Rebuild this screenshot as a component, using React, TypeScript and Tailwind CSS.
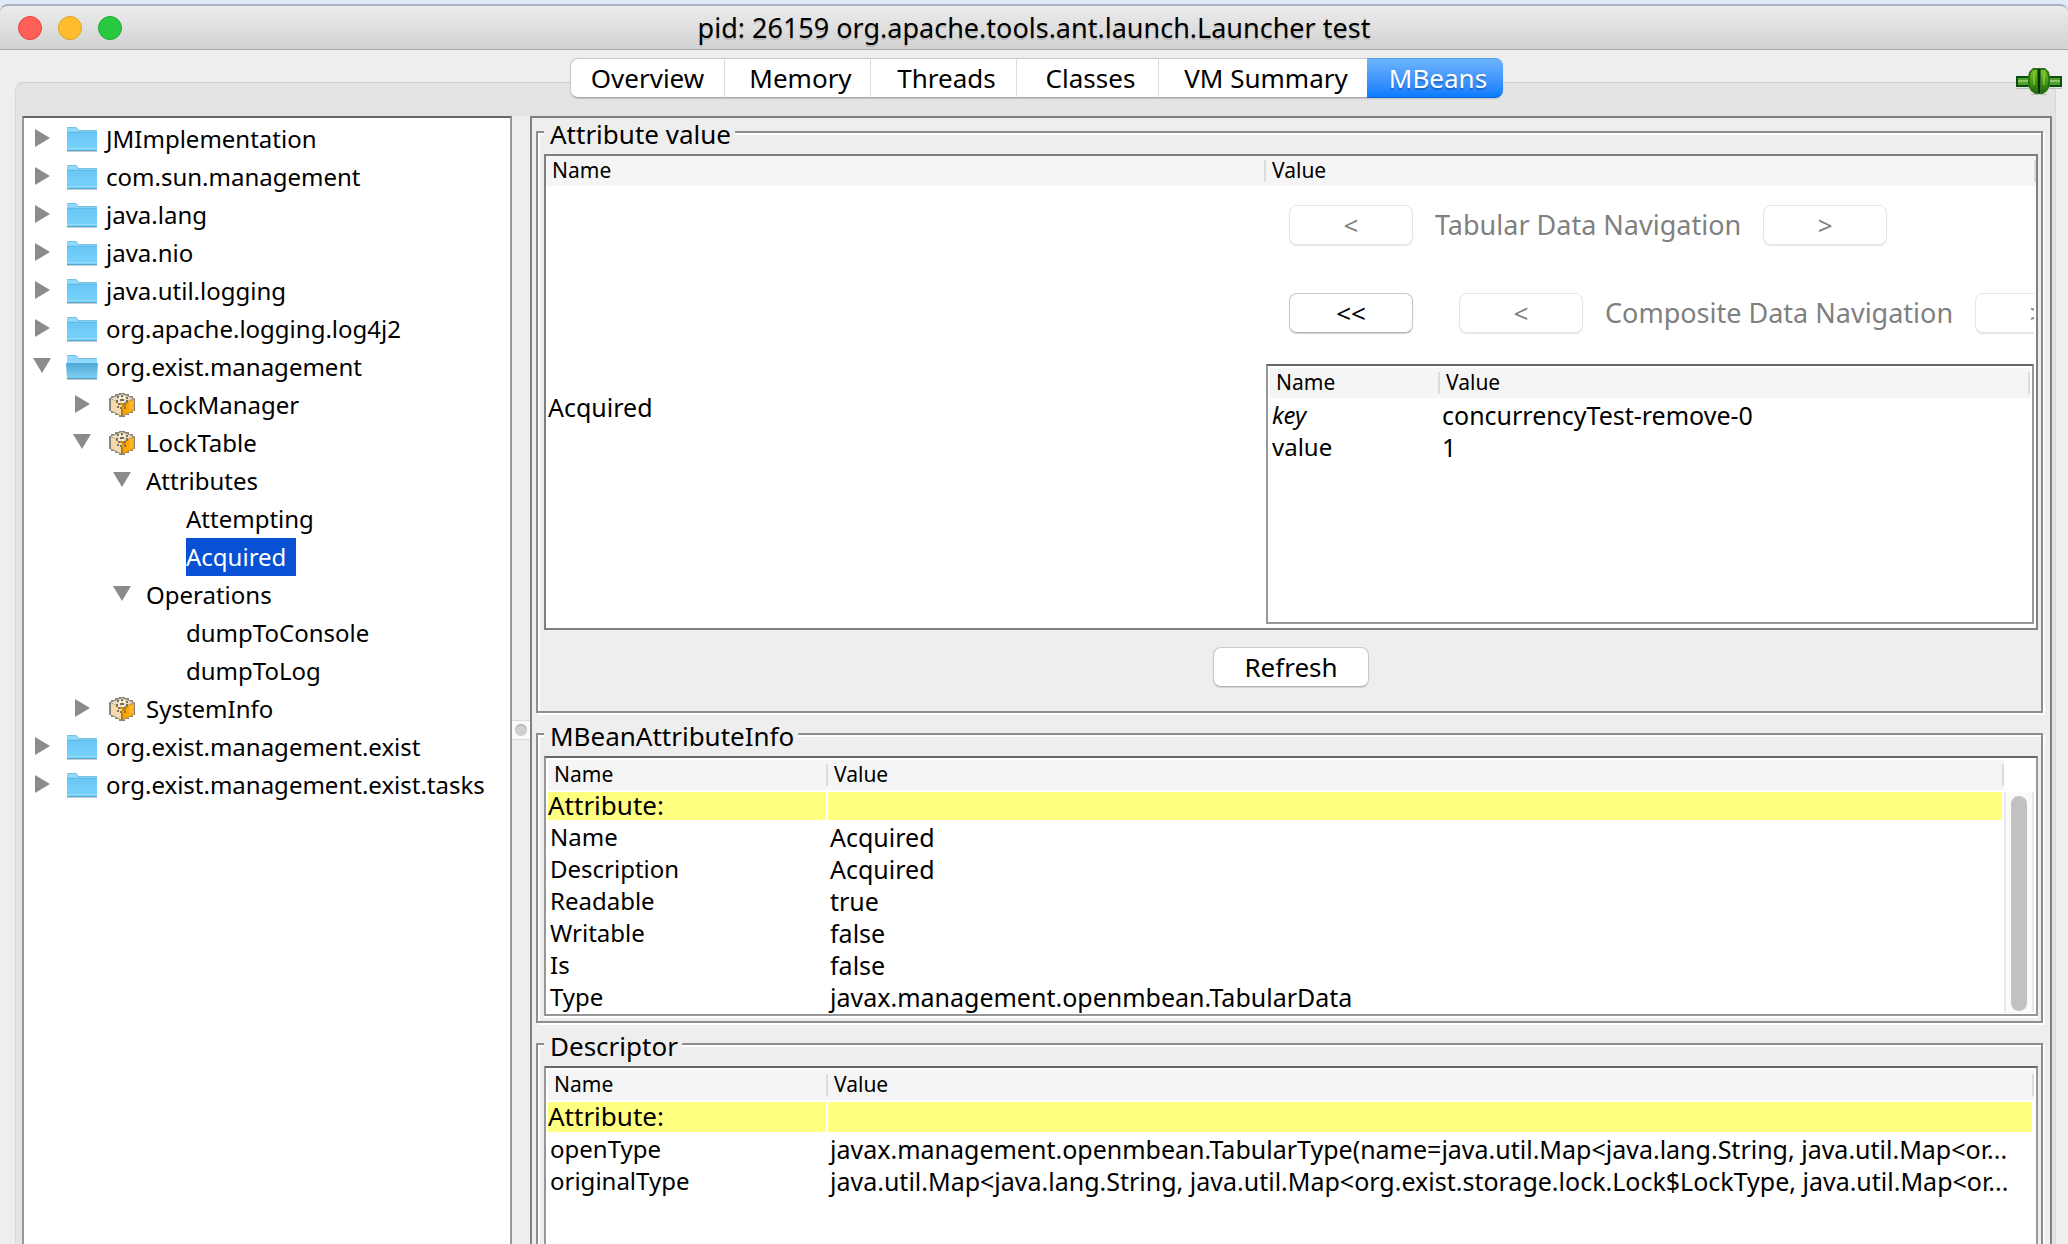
import React from "react";

type Twisty = "closed" | "open" | "none";
type NodeIcon = "folder" | "folder-open" | "bean" | "none";

interface TreeNode {
  label: string;
  level: 0 | 1 | 2 | 3;
  twisty: Twisty;
  icon: NodeIcon;
  selected?: boolean;
}

const TREE: TreeNode[] = [
  { label: "JMImplementation", level: 0, twisty: "closed", icon: "folder" },
  { label: "com.sun.management", level: 0, twisty: "closed", icon: "folder" },
  { label: "java.lang", level: 0, twisty: "closed", icon: "folder" },
  { label: "java.nio", level: 0, twisty: "closed", icon: "folder" },
  { label: "java.util.logging", level: 0, twisty: "closed", icon: "folder" },
  { label: "org.apache.logging.log4j2", level: 0, twisty: "closed", icon: "folder" },
  { label: "org.exist.management", level: 0, twisty: "open", icon: "folder-open" },
  { label: "LockManager", level: 1, twisty: "closed", icon: "bean" },
  { label: "LockTable", level: 1, twisty: "open", icon: "bean" },
  { label: "Attributes", level: 2, twisty: "open", icon: "none" },
  { label: "Attempting", level: 3, twisty: "none", icon: "none" },
  { label: "Acquired", level: 3, twisty: "none", icon: "none", selected: true },
  { label: "Operations", level: 2, twisty: "open", icon: "none" },
  { label: "dumpToConsole", level: 3, twisty: "none", icon: "none" },
  { label: "dumpToLog", level: 3, twisty: "none", icon: "none" },
  { label: "SystemInfo", level: 1, twisty: "closed", icon: "bean" },
  { label: "org.exist.management.exist", level: 0, twisty: "closed", icon: "folder" },
  { label: "org.exist.management.exist.tasks", level: 0, twisty: "closed", icon: "folder" },
];

const INDENT = ["pl-[9px]", "pl-[49px]", "pl-[89px]", "pl-[162px]"];

const TABS = [
  { label: "Overview", width: "min-w-[155px]" },
  { label: "Memory", width: "min-w-[146px]" },
  { label: "Threads", width: "min-w-[146px]" },
  { label: "Classes", width: "min-w-[142px]" },
  { label: "VM Summary", width: "min-w-[208px]" },
  { label: "MBeans", width: "min-w-[136px]" },
];

const ATTRIBUTE_INFO: [string, string][] = [
  ["Name", "Acquired"],
  ["Description", "Acquired"],
  ["Readable", "true"],
  ["Writable", "false"],
  ["Is", "false"],
  ["Type", "javax.management.openmbean.TabularData"],
];

const DESCRIPTOR: [string, string][] = [
  ["openType", "javax.management.openmbean.TabularType(name=java.util.Map<java.lang.String, java.util.Map<or..."],
  ["originalType", "java.util.Map<java.lang.String, java.util.Map<org.exist.storage.lock.Lock$LockType, java.util.Map<or..."],
];

function TwistyIcon({ state }: { state: Twisty }) {
  return (
    <svg viewBox="0 0 18 18" className="size-[18px] shrink-0" aria-hidden="true">
      {state === "closed" ? (
        <path d="M2 0 17 9 2 18Z" fill="#8b8b8b" />
      ) : (
        <path d="M0 1h18L9 16Z" fill="#8b8b8b" />
      )}
    </svg>
  );
}

function FolderIcon({ open }: { open: boolean }) {
  return (
    <svg viewBox="0 0 32 26" className="h-[26px] w-8 shrink-0" aria-hidden="true">
      <defs>
        <linearGradient id="folderFront" x1="0" y1="0" x2="0" y2="1">
          <stop offset="0" stopColor="#68c7f6" />
          <stop offset="1" stopColor="#7bd2fb" />
        </linearGradient>
        <linearGradient id="folderFrontOpen" x1="0" y1="0" x2="0" y2="1">
          <stop offset="0" stopColor="#4fa9d6" />
          <stop offset="1" stopColor="#7fd0f4" />
        </linearGradient>
      </defs>
      <path d="M1 25h30v1H1z" fill="#c9cdd0" />
      <path d="M1 2q0-1 1-1h7.500q1 0 1.500 1l1 2h18q1 0 1 1v19H1z" fill="#8fd9fd" />
      <path d="M1.500 1.500h8q1 0 1.500 1l1 2h19" fill="none" stroke="#6fb9de" strokeWidth=".8" />
      {open ? (
        <>
          <path d="M0 9h32l-1 16H1z" fill="url(#folderFrontOpen)" />
          <path d="M1 24.500h30" stroke="#4b9cc6" strokeWidth="1" />
        </>
      ) : (
        <>
          <path d="M1 6h30v19H1z" fill="url(#folderFront)" />
          <path d="M1 6.300h30" stroke="#58b2de" strokeWidth=".8" />
          <path d="M1 22.500h30" stroke="#9be0ff" strokeWidth=".8" />
          <path d="M1 24.500h30" stroke="#53a9d5" strokeWidth="1" />
        </>
      )}
    </svg>
  );
}

function BeanIcon() {
  return (
    <svg viewBox="0 0 26 24" className="h-6 w-[26px] shrink-0" aria-hidden="true">
      <path d="M10 0h6v1h4v2h4v2h2v13h-2v2h-4v2h-4v2h-6v-2H6v-2H2v-2H0V5h2V3h4V1h4z" fill="#8d8577" />
      <path d="M2 6l11 5v12L2 17.500z" fill="#f5d9aa" />
      <path d="M25 6 13 11v12l12-5.500z" fill="#ffa500" />
      <path d="M13 1 24 5.500 13 11 2 5.500z" fill="#e9dcc3" />
      <path d="M20 8h4v8h-2v2h-2z" fill="#ffb52e" />
      <path
        d="M8 3h2v2H8zM12 2h2v2h-2zM17 4h2v2h-2zM7 7h2v3H7zM9 10h2v2H9zM11 6h4v2h-4zM17 7h2v3h-2zM15 10h2v2h-2zM11 14h2v2h-2zM15 14h2v2h-2zM8 13h2v2H8z"
        fill="#7d7157"
      />
      <path d="M10 4h2v2h-2zM14 4h2v2h-2zM9 8h2v2H9zM13 8h2v2h-2z" fill="#fff6e0" />
      <path d="M11 10h4v2h-4zM13 12h4v2h-4z" fill="#c98a1c" />
      <path d="M12 16h2v7h-2z" fill="#b0791d" />
    </svg>
  );
}

function PlugIcon() {
  return (
    <svg viewBox="0 0 46 28" className="h-7 w-[46px]" aria-hidden="true">
      <defs>
        <linearGradient id="plugBody" x1="0" y1="0" x2="0" y2="1">
          <stop offset="0" stopColor="#7cc425" />
          <stop offset=".45" stopColor="#4c9f14" />
          <stop offset="1" stopColor="#1d6a0c" />
        </linearGradient>
      </defs>
      <path d="M0 20h13v1H0zM33 20h13v1H33zM15 26h16v1H15z" fill="#bdbdbd" />
      <path d="M0 8h13v11H0zM33 8h13v11H33z" fill="#0b4d10" />
      <path d="M2 10h11v7H2zM33 10h11v7H33z" fill="#4f9f2e" />
      <path d="M2 12h11v2H2zM33 12h11v2H33z" fill="#8cc66a" />
      <path d="M17 0h12l4 4 1 5v9l-3 5-4 3h-8l-4-3-3-5V9l1-5z" fill="#2b7414" />
      <path d="M17 2h4v22h-3l-3-3-1-4V9l1-4zM25 2h4l2 3 1 4v8l-1 4-3 3h-3z" fill="url(#plugBody)" />
      <path d="M17 5h2v12h-2zM27 5h2v12h-2z" fill="#93d250" opacity=".6" />
      <path d="M22 1h2v24h-2z" fill="#052f08" />
    </svg>
  );
}

function Tree() {
  return (
    <nav
      aria-label="MBeans"
      className="w-[490px] shrink-0 border-2 border-b-0 border-[#979797] border-t-[#666] bg-white pt-0.5"
    >
      <ul>
        {TREE.map((n) => (
          <li key={n.label} className={`flex h-[38px] items-center ${INDENT[n.level]}`}>
            {n.twisty !== "none" && (
              <span className="mr-[15px] flex pb-0.5">
                <TwistyIcon state={n.twisty} />
              </span>
            )}
            {n.icon !== "none" && (
              <span className="mr-2 flex w-8 justify-center">
                {n.icon === "bean" ? <BeanIcon /> : <FolderIcon open={n.icon === "folder-open"} />}
              </span>
            )}
            <button
              type="button"
              className={
                n.selected
                  ? "h-full bg-[#0850d4] pr-2.5 text-2xl leading-[38px] text-white"
                  : "h-full text-2xl leading-[38px]"
              }
            >
              {n.label}
            </button>
          </li>
        ))}
      </ul>
    </nav>
  );
}

function Group({ title, children, last }: { title: string; children: React.ReactNode; last?: boolean }) {
  return (
    <section
      className={`border-2 border-[#8e8e8e] pr-[3px] pl-1.5 shadow-[2px_2px_0_#fff,inset_2px_2px_0_#fff] ${
        last ? "flex min-h-0 flex-1 flex-col border-b-0" : ""
      }`}
    >
      <h2 className="-mt-[15px] mb-1 w-fit bg-[#eee] pr-1 pl-1.5 text-[26px] leading-8">{title}</h2>
      {children}
    </section>
  );
}

function Th({ children }: { children: string }) {
  return (
    <th className="h-[30px] bg-[#f5f5f5] p-0 text-left font-normal">
      <span className="flex h-[30px] items-center justify-between">
        <span className="pb-0.5 pl-1.5 text-[21px] leading-7">{children}</span>
        <span className="h-[22px] w-0.5 bg-[#dcdcdc]" />
      </span>
    </th>
  );
}

function InfoTable({ rows, tall }: { rows: [string, string][]; tall?: boolean }) {
  const mark = `border-t-2 border-r-2 border-b border-white bg-[#ffff80] p-0 align-top text-[26px] ${
    tall ? "h-[33px] leading-7" : "h-[31px] leading-[26px]"
  }`;
  return (
    <table className="w-full table-fixed border-separate border-spacing-0">
      <colgroup>
        <col className="w-[280px]" />
        <col />
      </colgroup>
      <thead>
        <tr>
          <Th>Name</Th>
          <Th>Value</Th>
        </tr>
      </thead>
      <tbody className="text-[25px]">
        <tr>
          <td className={mark}>Attribute:</td>
          <td className={mark} />
        </tr>
        {rows.map(([name, value]) => (
          <tr key={name}>
            <td className="p-0 pl-0.5 text-2xl leading-8">{name}</td>
            <td className="overflow-hidden p-0 pl-0.5 leading-8 text-ellipsis whitespace-nowrap">{value}</td>
          </tr>
        ))}
      </tbody>
    </table>
  );
}

function PushButton({ children, disabled, wide }: { children: string; disabled?: boolean; wide?: boolean }) {
  return (
    <button
      type="button"
      disabled={disabled}
      className={`h-10 shrink-0 rounded-lg border bg-white text-[26px] leading-9 ${wide ? "w-[156px]" : "w-[124px]"} ${
        disabled
          ? "border-[#e6e6e6] text-[#808080] shadow-[0_1px_1px_#e4e4e4]"
          : "border-[#c9c9c9] border-b-[#b4b4b4] shadow-[0_1px_1px_#d0d0d0]"
      }`}
    >
      {children}
    </button>
  );
}

function AttributeValue() {
  return (
    <div className="border-2 border-[#808080] bg-white">
      <table className="w-full table-fixed border-separate border-spacing-0">
        <colgroup>
          <col />
          <col className="w-[770px]" />
        </colgroup>
        <thead>
          <tr>
            <Th>Name</Th>
            <Th>Value</Th>
          </tr>
        </thead>
        <tbody className="text-[25px]">
          <tr>
            <td className="p-0 pl-0.5 align-middle leading-8">Acquired</td>
            <td className="p-0 pr-0.5 pb-1">
              <div className="flex items-center gap-[22px] overflow-hidden pt-[19px] pb-6 pl-[23px] text-[27px] leading-8 whitespace-nowrap text-[#808080]">
                <PushButton disabled>{"<"}</PushButton>
                <span>Tabular Data Navigation</span>
                <PushButton disabled>{">"}</PushButton>
              </div>
              <div className="flex items-center gap-[22px] overflow-hidden pt-6 pb-[31px] pl-[23px] text-[27px] leading-8 whitespace-nowrap text-[#808080]">
                <span className="mr-6 flex text-black">
                  <PushButton>{"<<"}</PushButton>
                </span>
                <PushButton disabled>{"<"}</PushButton>
                <span>Composite Data Navigation</span>
                <PushButton disabled>{">"}</PushButton>
              </div>
              <div className="min-h-[260px] border-2 border-[#979797] border-t-[#666] p-0.5">
                <table className="w-full table-fixed border-separate border-spacing-0">
                  <colgroup>
                    <col className="w-[170px]" />
                    <col />
                  </colgroup>
                  <thead>
                    <tr>
                      <Th>Name</Th>
                      <Th>Value</Th>
                    </tr>
                  </thead>
                  <tbody>
                    <tr>
                      <td className="p-0 pt-px pl-0.5 text-2xl leading-8 italic">key</td>
                      <td className="p-0 pt-px pl-0.5 leading-8">concurrencyTest-remove-0</td>
                    </tr>
                    <tr>
                      <td className="p-0 pl-0.5 text-2xl leading-8">value</td>
                      <td className="p-0 pl-0.5 leading-8">1</td>
                    </tr>
                  </tbody>
                </table>
              </div>
            </td>
          </tr>
        </tbody>
      </table>
    </div>
  );
}

export default function App() {
  return (
    <div className="flex h-screen flex-col overflow-hidden bg-[#dfeaf6] pt-1 font-['Noto_Sans',sans-serif] text-black">
      <header className="flex h-[46px] shrink-0 items-center rounded-t-lg border-t-2 border-b border-t-[#aab2bf] border-b-[#a8a8a8] bg-linear-to-b from-[#ececec] to-[#d2d2d2] px-[18px]">
        <div className="flex flex-1 gap-4">
          <button type="button" aria-label="Close" className="size-6 rounded-full border border-[#e0443e] bg-[#ff5f57]" />
          <button type="button" aria-label="Minimize" className="size-6 rounded-full border border-[#dea123] bg-[#ffbd2e]" />
          <button type="button" aria-label="Zoom" className="size-6 rounded-full border border-[#1aab29] bg-[#28c940]" />
        </div>
        <h1 className="text-[27px] leading-8 whitespace-nowrap [text-shadow:0_2px_1px_#00000026]">
          pid: 26159 org.apache.tools.ant.launch.Launcher test
        </h1>
        <div className="flex-1" />
      </header>

      <main className="relative flex min-h-0 flex-1 flex-col bg-[#eee] pt-8 pr-3 pl-[15px]">
        <div className="flex min-h-0 flex-1 flex-col rounded-t-lg border border-b-0 border-[#d8d8d8] border-t-[#cdcdcd] bg-[#e4e4e4]">
          <div role="tablist" className="-mt-[25px] mb-[18px] flex justify-center pl-0.5">
            <div className="flex rounded-lg shadow-[0_1px_1px_#c4c4c4]">
              {TABS.map((tab, i) => {
                const active = tab.label === "MBeans";
                return (
                  <button
                    key={tab.label}
                    type="button"
                    role="tab"
                    aria-selected={active}
                    className={`h-10 border-y text-[26px] leading-[38px] ${tab.width} ${
                      active
                        ? "rounded-r-lg border-t-[#4a9ff5] border-b-[#0a62e8] bg-linear-to-b from-[#6cb3fa] to-[#067bff] text-white [text-shadow:0_2px_1px_#00000040]"
                        : "border-t-[#c8c8c8] border-r-[#dcdcdc] border-b-[#a8a8a8] bg-white"
                    } ${i === 0 ? "rounded-l-lg border-l border-l-[#c8c8c8] px-3" : "pr-2 pl-3.5"} ${
                      i < 4 ? "border-r" : ""
                    }`}
                  >
                    {tab.label}
                  </button>
                );
              })}
            </div>
          </div>

          <div className="mr-[3px] ml-1.5 flex min-h-0 flex-1 bg-[#eee]">
            <Tree />
            <div role="separator" className="flex w-[18px] shrink-0 items-center justify-center">
              <span className="mt-[100px] flex h-5 w-full items-center justify-center border-y border-[#dcdcdc] bg-[#fafafa]">
                <span className="size-3 rounded-full bg-[#d0d0d0] shadow-[inset_0_1px_1px_#a8a8a8]" />
              </span>
            </div>
            <div className="flex min-w-0 flex-1 flex-col gap-5 border-2 border-b-0 border-[#808080] pt-[13px] pr-[7px] pl-1">
              <Group title="Attribute value">
                <AttributeValue />
                <div className="flex justify-center pt-[17px] pb-6">
                  <PushButton wide>Refresh</PushButton>
                </div>
              </Group>
              <Group title="MBeanAttributeInfo">
                <div className="mb-[5px] flex border-2 border-[#979797] border-t-[#666] bg-white px-0.5 pt-0.5 pb-px shadow-[0_2px_0_#fff]">
                  <div className="min-w-0 flex-1">
                    <InfoTable rows={ATTRIBUTE_INFO} />
                  </div>
                  <div className="flex w-[30px] shrink-0 flex-col pt-8">
                    <div className="flex flex-1 justify-center border-x-2 border-[#e9e9e9] bg-[#fafafa] pt-1 pb-0.5">
                      <div className="w-4 rounded-full bg-[#c1c1c1]" />
                    </div>
                  </div>
                </div>
              </Group>
              <Group title="Descriptor" last>
                <div className="min-h-0 flex-1 overflow-hidden border-2 border-b-0 border-[#979797] border-t-[#666] bg-white p-0.5">
                  <InfoTable rows={DESCRIPTOR} tall />
                </div>
              </Group>
            </div>
          </div>
        </div>
        <div className="absolute top-[18px] right-1.5">
          <PlugIcon />
        </div>
      </main>
    </div>
  );
}
